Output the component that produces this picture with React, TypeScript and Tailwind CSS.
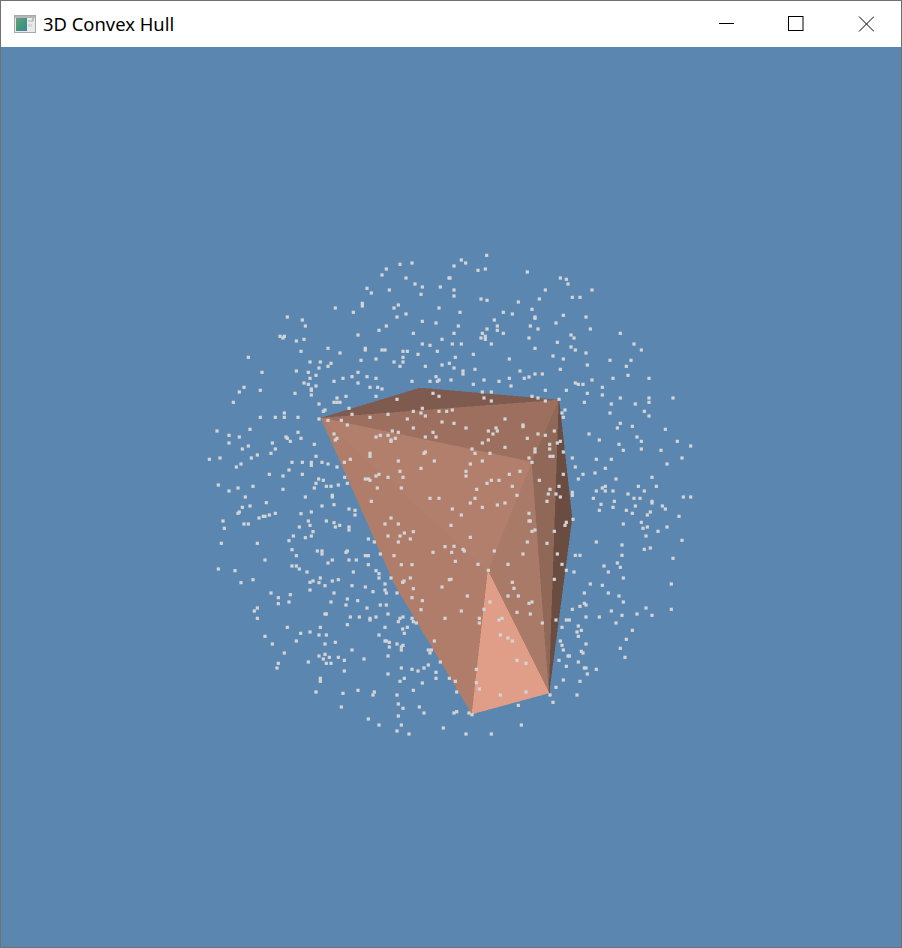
import React from 'react';

type Pt = [number, number];

// dot positions read off four 3x crops, hence the origin on each group
const toPage = (ox: number, oy: number, flat: number[]): Pt[] => {
  const out: Pt[] = [];
  for (let i = 0; i < flat.length; i += 2) out.push([ox + flat[i] / 3, oy + flat[i + 1] / 3]);
  return out;
};

const topLeft = toPage(200, 250, [
  600,43,636,39,559,57,546,75,618,84,747,84,645,102,667,111,721,111,501,115,514,129,568,120,663,133,487,160,487,168,595,165,582,174,717,174,406,174,460,187,618,192,591,201,262,201,307,210,667,214,708,219,316,228,559,228,537,241,640,250,474,255,240,259,253,259,249,264,312,268,289,273,726,268,667,282,690,286,384,295,496,295,496,300,546,300,555,300,712,304,609,304,622,304,303,304,420,309,654,313,145,322,609,322,528,327,483,331,330,336,361,336,393,340,582,336,609,336,726,345,748,340,384,349,600,349,676,349,357,354,289,363,325,367,186,367,474,367,348,376,456,380,501,380,429,385,528,385,708,380,330,385,402,394,636,394,690,394,712,394,717,390,312,399,325,403,474,399,348,408,510,412,533,412,546,417,132,412,334,417,334,421,181,421,118,426,285,430,334,435,438,439,411,444,528,439,100,457,402,457,411,457,420,457,357,462,375,480,370,484,447,475,253,489,253,502,226,502,181,502,294,502,357,507,456,493,510,502,564,493,591,448,699,430,717,439,667,475,640,484,663,489,676,498,717,484,740,484,726,516,622,507,384,511,424,511,442,525,640,534,51,543,150,538,87,556,118,561,87,579,217,579,258,561,262,565,271,574,294,547,303,565,343,583,145,588,127,597,226,597,213,610,172,615,154,624,28,628,60,624,348,619,402,552,411,565,406,570,528,561,541,556,564,556,577,543,595,547,573,570,573,574,586,565,676,561,699,547,708,561,451,628,433,637,510,610,510,619,672,610,676,606,595,633,703,633,123,642,109,651,276,637,307,637,334,637,334,646,366,637,384,642,411,651,267,660,600,664,663,655,208,673,249,678,307,673,537,673,528,678,434,682,356,687,370,691,496,687,505,687,510,691,564,682,609,682,55,705,348,700,442,700,415,705,379,709,393,709,343,714,114,714,159,709,87,723,249,718,532,714,604,714,136,741,316,741,397,736,397,741,690,745,717,745,
]);

const topRight = toPage(450, 250, [
  110,16,34,30,47,39,12,48,84,61,106,57,232,66,331,84,349,88,354,102,0,84,12,120,286,120,426,120,12,138,93,147,111,151,205,156,268,147,367,142,390,142,246,178,30,187,160,187,187,192,340,196,408,201,255,201,255,205,133,210,318,219,25,228,142,228,241,228,111,237,142,241,264,237,421,237,12,250,97,250,160,250,363,255,511,250,93,264,106,259,106,268,237,264,372,264,7,282,34,282,124,282,322,277,552,282,255,295,363,291,376,300,574,300,408,309,70,313,309,318,16,322,178,327,340,327,480,331,543,331,412,345,529,349,12,354,75,358,331,358,210,363,39,363,39,372,255,372,277,372,534,376,237,381,223,385,178,385,489,385,597,385,102,390,3,390,426,390,147,394,376,399,385,403,399,403,70,403,183,408,457,412,286,421,349,421,97,426,124,426,412,430,457,435,246,439,264,444,327,448,597,444,511,444,669,444,102,444,124,453,286,453,403,457,597,457,484,462,556,462,7,480,345,480,336,489,583,484,480,489,597,498,340,502,165,507,511,520,12,520,219,525,219,530,547,529,48,534,502,534,138,534,142,543,115,543,646,538,313,543,264,552,286,556,129,552,417,552,561,561,232,565,115,570,448,570,574,574,682,574,331,574,322,579,97,579,299,583,507,583,722,588,165,592,66,597,299,597,574,597,255,597,255,606,520,601,633,601,75,610,120,610,340,606,300,619,309,619,237,624,367,624,439,628,484,628,696,624,246,637,97,633,61,642,651,642,376,651,466,655,210,664,48,664,435,669,399,673,178,673,340,673,48,678,606,682,385,687,498,687,268,691,124,691,147,691,111,700,187,709,466,709,565,709,619,709,327,709,457,714,80,718,300,718,439,723,466,723,489,723,583,723,295,732,318,732,534,732,367,727,367,736,201,736,331,741,700,741,722,741,75,745,430,745,552,745,570,745,
]);

const bottomLeft = toPage(200, 500, [
  199,8,150,18,127,22,366,18,402,14,514,4,447,27,465,31,118,36,114,40,303,41,334,36,465,45,226,40,208,45,190,49,195,49,177,54,69,63,325,63,379,63,402,68,132,72,145,72,330,76,419,76,406,81,298,81,447,81,447,90,73,85,339,95,573,54,555,72,595,72,640,95,613,99,564,108,600,108,280,108,334,108,316,113,505,117,631,117,267,122,523,126,595,126,64,130,172,130,735,140,276,149,352,153,366,153,366,162,442,153,438,157,699,157,289,167,496,167,505,167,541,162,582,167,195,180,397,180,447,180,469,180,384,189,276,198,289,198,298,207,505,194,604,194,636,194,55,207,105,212,321,216,460,216,528,212,537,221,537,234,573,234,631,234,612,243,608,247,415,239,397,243,361,234,339,243,330,247,357,248,159,239,123,248,375,257,456,257,555,252,726,261,748,239,496,261,640,266,330,270,555,270,519,275,559,279,591,279,402,279,213,279,271,284,235,293,636,293,442,297,667,302,473,302,235,311,267,306,393,306,438,315,541,315,559,315,172,324,501,324,163,333,663,329,375,342,379,342,564,342,172,355,451,351,478,351,510,355,510,360,528,351,735,355,609,351,600,355,595,365,636,355,640,365,649,369,442,374,262,382,361,382,555,382,622,382,608,387,302,400,330,396,613,400,195,409,357,405,379,405,537,405,555,423,559,423,568,427,289,423,703,423,217,432,375,432,406,427,591,432,568,441,609,436,604,441,604,450,456,450,685,450,694,450,690,459,253,459,375,463,357,468,388,472,415,472,564,468,370,477,433,481,492,477,325,486,379,490,393,490,721,486,235,490,231,504,685,495,672,504,604,504,636,508,654,513,433,513,564,522,708,517,708,535,748,535,361,535,361,544,613,535,600,544,667,549,348,576,429,580,474,571,523,576,519,585,640,571,591,585,595,612,424,621,609,625,658,621,672,639,595,648,505,657,537,675,604,675,730,684,591,693,627,702,
]);

const bottomRight = toPage(450, 500, [
  61,9,97,22,142,15,165,9,291,4,7,27,34,45,237,40,237,63,241,63,349,67,345,76,369,58,246,94,255,90,3,76,313,94,61,112,232,126,291,130,133,153,39,148,43,153,12,139,5,157,219,162,322,162,16,184,84,193,174,193,336,193,115,211,349,211,372,216,313,238,3,238,187,247,192,265,52,288,174,288,205,288,120,306,246,306,237,310,102,328,34,333,201,337,241,342,88,355,147,360,156,355,318,360,88,369,277,369,336,382,151,405,174,414,187,423,331,423,336,436,340,450,201,481,228,490,327,481,79,508,349,499,16,544,79,548,340,540,88,567,20,576,151,585,228,576,300,585,318,562,309,607,205,616,12,639,20,635,57,639,66,644,214,675,48,702,124,702,
  453,13,493,4,556,18,606,4,606,9,637,18,646,27,489,22,448,31,529,31,547,40,592,45,601,36,687,49,574,67,520,72,592,81,579,85,651,81,624,94,588,108,696,121,439,126,516,135,583,148,601,144,516,166,376,166,390,166,669,175,502,189,462,198,511,202,475,216,520,234,664,252,421,252,457,256,403,279,475,279,507,288,520,306,403,310,408,315,588,324,664,328,367,328,390,319,484,333,561,342,516,346,606,346,408,351,448,351,349,360,358,360,498,369,385,378,394,391,381,396,547,391,385,409,529,418,408,432,511,445,394,454,399,459,354,468,358,468,525,472,385,486,403,504,408,504,439,508,412,522,390,544,381,585,
]);

const dots = [...topLeft, ...topRight, ...bottomLeft, ...bottomRight];

const faces: { points: string; fill: string }[] = [
  { points: '321,418 420,388 559,400', fill: '#7e5a4f' },
  { points: '321,418 559,400 532,462', fill: '#9c6f5e' },
  { points: '321,418 532,462 488,571', fill: '#b27f6d' },
  { points: '321,418 488,571 472,714 395,585', fill: '#b07d6b' },
  { points: '532,462 549,693 488,571', fill: '#aa7a68' },
  { points: '559,400 549,693 532,462', fill: '#8f6858' },
  { points: '559,400 572,518 549,693', fill: '#6a4c41' },
  { points: '488,571 549,693 472,714', fill: '#e09d87' },
];

function Hull() {
  return (
    <svg className="block h-[900px] w-[900px]" viewBox="1 47 900 900">
      {faces.map((f) => (
        <polygon key={f.points} points={f.points} fill={f.fill} stroke={f.fill} strokeWidth="0.5" shapeRendering="crispEdges" />
      ))}
      {dots.map(([x, y], i) => (
        <rect key={i} x={x - 1.6} y={y - 1.6} width="3.2" height="3.2" fill="#d2d4d6" />
      ))}
    </svg>
  );
}

function AppIcon() {
  return (
    <svg className="h-[18px] w-[22px]" viewBox="0 0 22 18">
      <defs>
        <linearGradient id="pane" x1="0" y1="0" x2="1" y2="1">
          <stop offset="0" stopColor="#6f9f84" />
          <stop offset="0.5" stopColor="#3f9a78" />
          <stop offset="1" stopColor="#4a7fa6" />
        </linearGradient>
      </defs>
      <rect x="0.5" y="0.5" width="21" height="17" fill="#e8e9e8" stroke="#a9a9a9" />
      <rect x="1" y="1" width="20" height="2" fill="#b4b6ba" />
      <rect x="2" y="3" width="11" height="13" fill="url(#pane)" />
      <rect x="14" y="5" width="5" height="2" fill="#c6cec9" />
      <rect x="14" y="9" width="4" height="3" fill="#d3d9d5" />
      <rect x="18" y="3" width="2" height="3" fill="#a9c6b8" />
    </svg>
  );
}

export default function App() {
  return (
    <div className="flex h-[948px] w-[902px] flex-col border border-[#707070] bg-[#5b86b0] font-['Noto_Sans',sans-serif]">
      {/* title bar */}
      <div className="flex h-[46px] items-center bg-white">
        <div className="ml-[13px] flex items-center">
          <AppIcon />
        </div>
        <span className="ml-[7px] text-[18.4px] leading-none text-black">3D Convex Hull</span>
        <div className="ml-auto flex h-full items-center">
          <button className="flex h-full w-[70px] items-center justify-center">
            <svg className="h-4 w-4" viewBox="0 0 16 16">
              <path d="M1 7.5H16" stroke="#000" strokeWidth="1" />
            </svg>
          </button>
          <button className="flex h-full w-[70px] items-center justify-center">
            <svg className="h-4 w-4" viewBox="0 0 16 16">
              <rect x="0.5" y="0.5" width="14.5" height="14" fill="none" stroke="#000" />
            </svg>
          </button>
          <button className="flex h-full w-[70px] items-center justify-center">
            <svg className="h-4 w-4" viewBox="0 0 16 16">
              <path d="M1 0.5L16 15.5M16 0.5L1 15.5" stroke="#000" strokeWidth="1" fill="none" />
            </svg>
          </button>
        </div>
      </div>
      {/* gl canvas */}
      <div className="flex-1 overflow-hidden">
        <Hull />
      </div>
    </div>
  );
}
